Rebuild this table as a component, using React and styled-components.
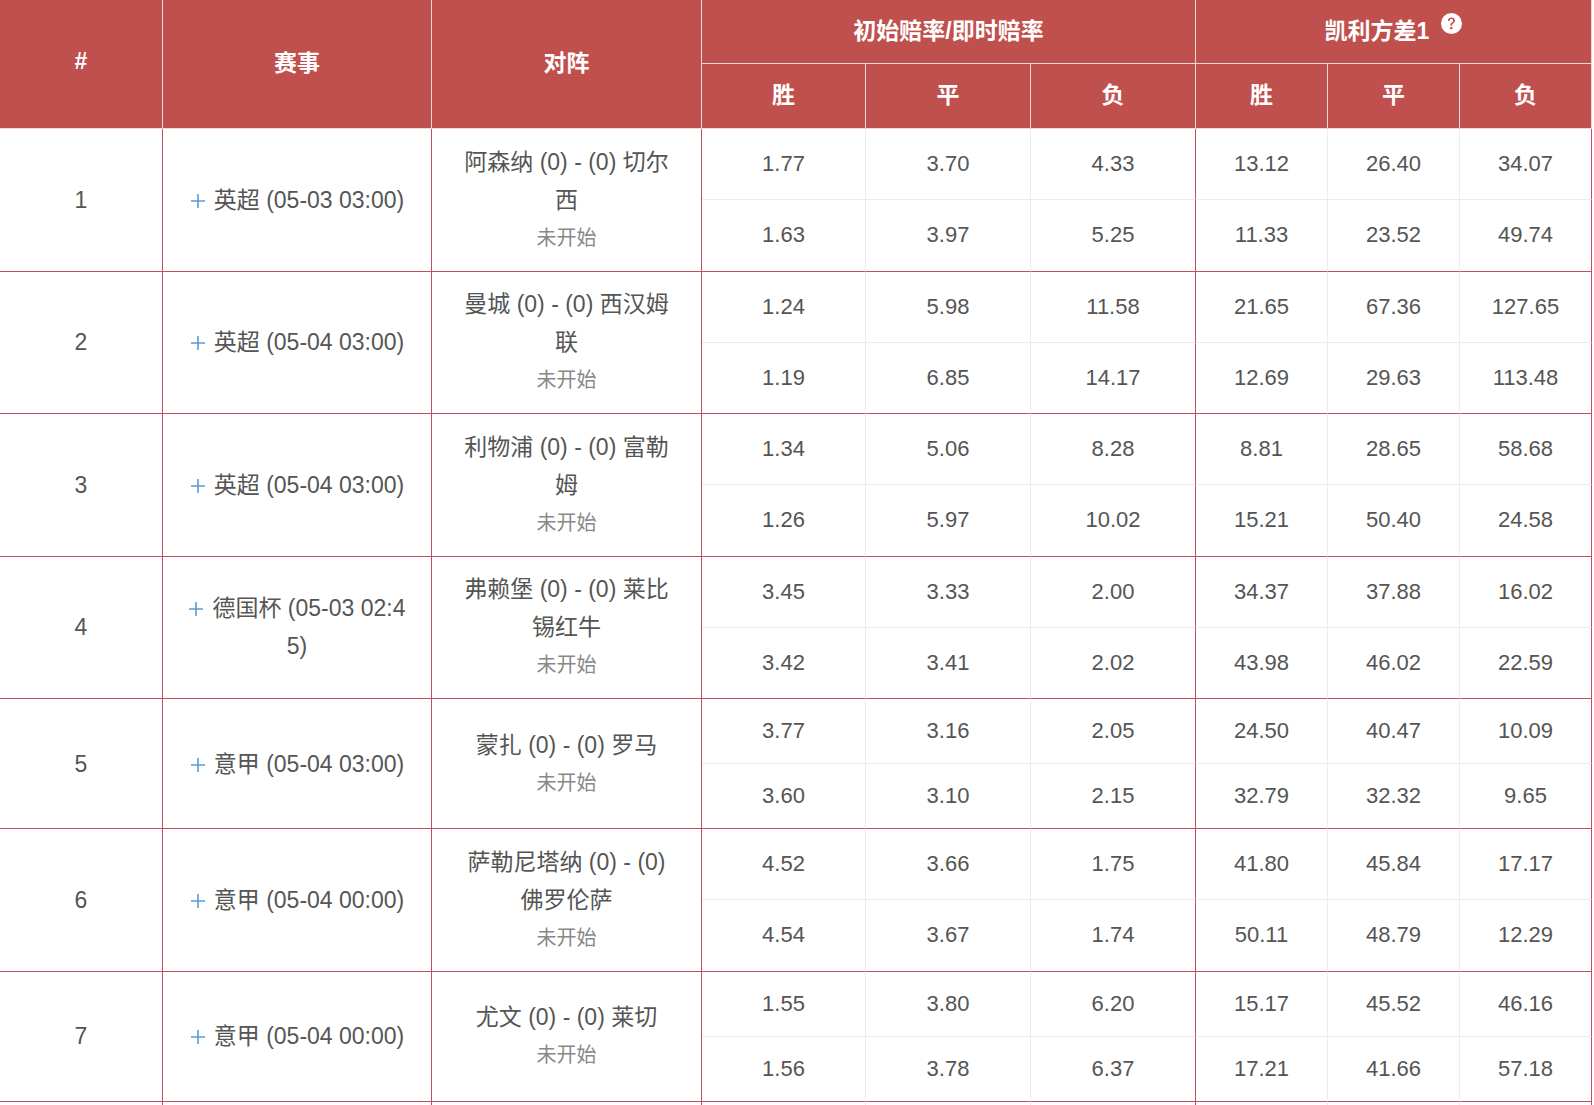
import React from 'react';
import styled, { createGlobalStyle } from 'styled-components';
import { BsQuestionCircleFill } from 'react-icons/bs';

const Global = createGlobalStyle`
  html, body { margin: 0; padding: 0; background: #fff; }
  body { font-family: "Liberation Sans", Arial, "Noto Sans CJK SC", sans-serif; }
`;

const DARK = '#c0505c';
const LIGHT = '#ececec';
const HEAD_LINE = '#f2d6d6';

const Table = styled.table`
  border-collapse: separate;
  border-spacing: 0;
  table-layout: fixed;
  width: 1592px;
  font-size: 22px;
  color: #555;
`;

const HeadCell = styled.th`
  background: #c0504d;
  color: #fff;
  font-weight: bold;
  font-size: 23px;
  text-align: center;
  vertical-align: middle;
  padding: 0 0 6px;
  height: ${p => p.$h}px;
  box-sizing: border-box;
  border-right: 1px solid ${HEAD_LINE};
  border-bottom: 1px solid ${HEAD_LINE};
`;

const HeadInner = styled.span`
  display: inline-flex;
  align-items: center;
  gap: 12px;
`;

const Help = styled(BsQuestionCircleFill)`
  width: 21px;
  height: 21px;
  color: #fff;
  margin-top: -10px;
`;

const InfoCell = styled.td`
  text-align: center;
  vertical-align: middle;
  padding: 13.75px ${p => p.$px}px;
  font-size: 23px;
  line-height: 38px;
  word-break: break-all;
  border-right: 1px solid ${DARK};
  border-bottom: 1px solid ${DARK};
`;

const OddCell = styled.td`
  text-align: center;
  vertical-align: middle;
  padding: 13px 0;
  line-height: 38px;
  border-right: 1px solid ${p => (p.$strong ? DARK : LIGHT)};
  border-bottom: 1px solid ${p => (p.$end ? DARK : LIGHT)};
`;

const Status = styled.div`
  font-size: 20px;
  color: #888;
  line-height: 38px;
`;

const Plus = styled.svg`
  width: 16px;
  height: 16px;
  vertical-align: -1px;
  margin-right: 8px;
`;

const PlusIcon = () => (
  <Plus viewBox="0 0 16 16">
    <path d="M8 1v14M1 8h14" stroke="#5b9bd5" strokeWidth="1.6" fill="none" />
  </Plus>
);

const matches = [
  { league: '英超 (05-03 03:00)', vs: '阿森纳 (0) - (0) 切尔西',
    o: [['1.77', '3.70', '4.33'], ['1.63', '3.97', '5.25']],
    k: [['13.12', '26.40', '34.07'], ['11.33', '23.52', '49.74']] },
  { league: '英超 (05-04 03:00)', vs: '曼城 (0) - (0) 西汉姆联',
    o: [['1.24', '5.98', '11.58'], ['1.19', '6.85', '14.17']],
    k: [['21.65', '67.36', '127.65'], ['12.69', '29.63', '113.48']] },
  { league: '英超 (05-04 03:00)', vs: '利物浦 (0) - (0) 富勒姆',
    o: [['1.34', '5.06', '8.28'], ['1.26', '5.97', '10.02']],
    k: [['8.81', '28.65', '58.68'], ['15.21', '50.40', '24.58']] },
  { league: '德国杯 (05-03 02:45)', vs: '弗赖堡 (0) - (0) 莱比锡红牛',
    o: [['3.45', '3.33', '2.00'], ['3.42', '3.41', '2.02']],
    k: [['34.37', '37.88', '16.02'], ['43.98', '46.02', '22.59']] },
  { league: '意甲 (05-04 03:00)', vs: '蒙扎 (0) - (0) 罗马',
    o: [['3.77', '3.16', '2.05'], ['3.60', '3.10', '2.15']],
    k: [['24.50', '40.47', '10.09'], ['32.79', '32.32', '9.65']] },
  { league: '意甲 (05-04 00:00)', vs: '萨勒尼塔纳 (0) - (0) 佛罗伦萨',
    o: [['4.52', '3.66', '1.75'], ['4.54', '3.67', '1.74']],
    k: [['41.80', '45.84', '17.17'], ['50.11', '48.79', '12.29']] },
  { league: '意甲 (05-04 00:00)', vs: '尤文 (0) - (0) 莱切',
    o: [['1.55', '3.80', '6.20'], ['1.56', '3.78', '6.37']],
    k: [['15.17', '45.52', '46.16'], ['17.21', '41.66', '57.18']] },
  { league: '法甲 (05-04 03:00)', vs: '里尔 (0) - (0) 南特',
    o: [['1.45', '4.20', '6.50'], ['1.40', '4.50', '7.00']],
    k: [['12.30', '30.20', '40.10'], ['14.50', '33.70', '42.80']] },
];

const widths = [163, 269, 270, 164, 165, 165, 132, 132, 132];

const OddsCells = ({ o, k, end }) => (
  <>
    <OddCell $end={end}>{o[0]}</OddCell>
    <OddCell $end={end}>{o[1]}</OddCell>
    <OddCell $end={end} $strong>{o[2]}</OddCell>
    <OddCell $end={end}>{k[0]}</OddCell>
    <OddCell $end={end}>{k[1]}</OddCell>
    <OddCell $end={end} $strong>{k[2]}</OddCell>
  </>
);

export default function App() {
  return (
    <>
      <Global />
      <Table>
        <colgroup>
          {widths.map((w, i) => <col key={i} style={{ width: w }} />)}
        </colgroup>
        <thead>
          <tr>
            <HeadCell rowSpan={2}>#</HeadCell>
            <HeadCell rowSpan={2}>赛事</HeadCell>
            <HeadCell rowSpan={2}>对阵</HeadCell>
            <HeadCell colSpan={3} $h={64}>初始赔率/即时赔率</HeadCell>
            <HeadCell colSpan={3} $h={64}>
              <HeadInner>凯利方差1<Help /></HeadInner>
            </HeadCell>
          </tr>
          <tr>
            <HeadCell $h={65}>胜</HeadCell>
            <HeadCell $h={65}>平</HeadCell>
            <HeadCell $h={65}>负</HeadCell>
            <HeadCell $h={65}>胜</HeadCell>
            <HeadCell $h={65}>平</HeadCell>
            <HeadCell $h={65}>负</HeadCell>
          </tr>
        </thead>
        <tbody>
          {matches.map((m, i) => (
            <React.Fragment key={i}>
              <tr>
                <InfoCell rowSpan={2} $px={10}>{i + 1}</InfoCell>
                <InfoCell rowSpan={2} $px={22}><PlusIcon />{m.league}</InfoCell>
                <InfoCell rowSpan={2} $px={28}>
                  {m.vs}
                  <Status>未开始</Status>
                </InfoCell>
                <OddsCells o={m.o[0]} k={m.k[0]} />
              </tr>
              <tr>
                <OddsCells o={m.o[1]} k={m.k[1]} end />
              </tr>
            </React.Fragment>
          ))}
        </tbody>
      </Table>
    </>
  );
}
